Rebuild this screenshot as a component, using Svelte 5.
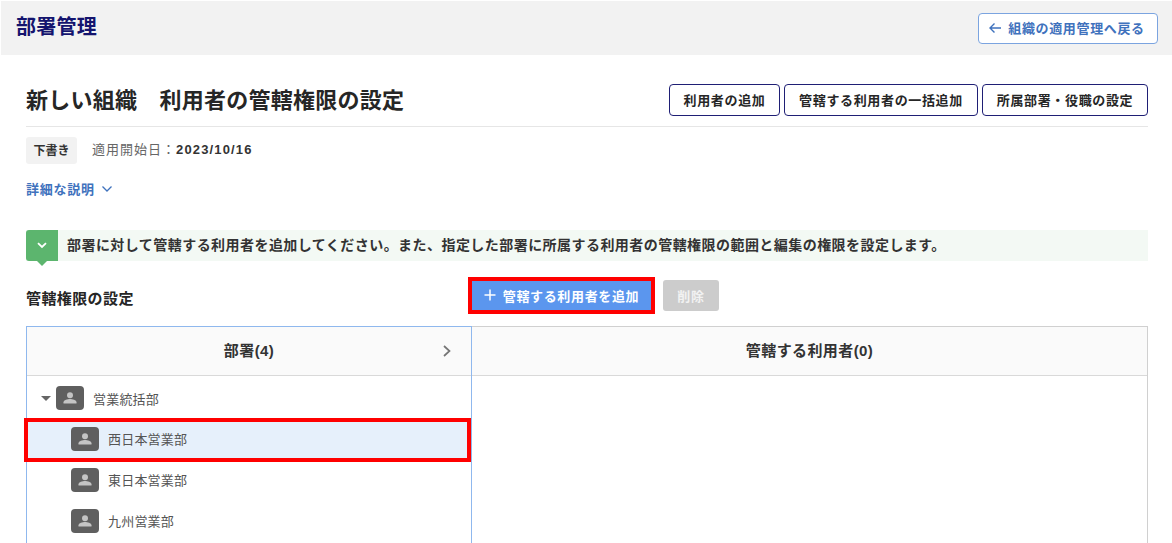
<script>
  const departments = [
    { name: '西日本営業部', selected: true },
    { name: '東日本営業部' },
    { name: '九州営業部' }
  ]
</script>

{#snippet orgIcon()}
  <span class="org-icon">
    <svg width="16" height="16" viewBox="0 0 16 16" aria-hidden="true">
      <circle cx="8" cy="5.2" r="3" fill="#c4c4c4" />
      <path d="M1.5 13.5v-1.3c0-2 4.2-3.2 6.5-3.2s6.5 1.2 6.5 3.2v1.3z" fill="#c4c4c4" />
    </svg>
  </span>
{/snippet}

<div class="page">
  <header class="top">
    <h1>部署管理</h1>
    <button class="back">
      <svg width="14" height="14" viewBox="0 0 14 14" aria-hidden="true">
        <path d="M13 7H2M6.5 2.5L2 7l4.5 4.5" fill="none" stroke="currentColor" stroke-width="1.4" />
      </svg>
      組織の適用管理へ戻る
    </button>
  </header>

  <main>
    <div class="title-row">
      <h2>新しい組織　利用者の管轄権限の設定</h2>
      <div class="actions">
        <button class="outline w1">利用者の追加</button>
        <button class="outline w2">管轄する利用者の一括追加</button>
        <button class="outline w3">所属部署・役職の設定</button>
      </div>
    </div>

    <div class="meta">
      <span class="badge">下書き</span>
      <span class="date">適用開始日：<b>2023/10/16</b></span>
    </div>

    <a class="detail" href="#top">
      詳細な説明
      <svg width="12" height="8" viewBox="0 0 12 8" aria-hidden="true">
        <path d="M1.5 1.5L6 6l4.5-4.5" fill="none" stroke="currentColor" stroke-width="1.3" />
      </svg>
    </a>

    <div class="notice">
      <span class="notice-icon">
        <svg width="10" height="7" viewBox="0 0 10 7" aria-hidden="true">
          <path d="M1 1.2L5 5l4-3.8" fill="none" stroke="#fff" stroke-width="1.8" />
        </svg>
      </span>
      <p>部署に対して管轄する利用者を追加してください。また、指定した部署に所属する利用者の管轄権限の範囲と編集の権限を設定します。</p>
    </div>

    <div class="section-row">
      <h3>管轄権限の設定</h3>
      <div class="section-actions">
        <button class="primary">
          <svg width="12" height="12" viewBox="0 0 12 12" aria-hidden="true">
            <path d="M6 .5v11M.5 6h11" stroke="#fff" stroke-width="1.5" />
          </svg>
          管轄する利用者を追加
        </button>
        <button class="disabled">削除</button>
      </div>
    </div>

    <div class="table">
      <section class="left">
        <div class="th">
          部署(4)
          <svg class="expand" width="10" height="14" viewBox="0 0 10 14" aria-hidden="true">
            <path d="M2 2l5.5 5L2 12" fill="none" stroke="#757575" stroke-width="1.7" />
          </svg>
        </div>
        <div class="row root">
          <span class="caret"></span>
          {@render orgIcon()}
          <span class="name">営業統括部</span>
        </div>
        {#each departments as d}
          <div class="row child" class:selected={d.selected}>
            {@render orgIcon()}
            <span class="name">{d.name}</span>
          </div>
        {/each}
      </section>
      <section class="right">
        <div class="th">管轄する利用者(0)</div>
      </section>
    </div>
  </main>
</div>

<style>
  :global(body) {
    margin: 0;
    background: #fff;
    overflow: hidden;
  }

  .page {
    height: 543px;
    overflow: hidden;
    font-family: 'Liberation Sans', 'Noto Sans CJK JP', sans-serif;
    color: #333;
  }

  button {
    font-family: inherit;
    cursor: pointer;
  }

  .top {
    height: 54px;
    margin: 1px 0 0 1px;
    padding: 0 14px 0 15px;
    background: #f2f2f2;
    display: flex;
    align-items: center;
    justify-content: space-between;
  }

  h1 {
    margin: 0 0 2px;
    font-size: 20px;
    line-height: 28px;
    letter-spacing: 0.25px;
    font-weight: 700;
    color: #14146e;
  }

  .back {
    width: 180px;
    height: 31px;
    padding: 0 3px 1px 0;
    display: flex;
    align-items: center;
    justify-content: center;
    gap: 6px;
    background: #fff;
    border: 1px solid #7ba4e0;
    border-radius: 4px;
    font-size: 13px;
    letter-spacing: 0.65px;
    font-weight: 700;
    color: #3f72bd;
  }

  main {
    padding: 0 24px 0 26px;
  }

  .title-row {
    height: 72px;
    padding-top: 29px;
    box-sizing: border-box;
    display: flex;
    justify-content: space-between;
    border-bottom: 1px solid #e6e6e6;
  }

  h2 {
    margin: 1px 0 0;
    font-size: 22px;
    line-height: 32px;
    letter-spacing: 0.25px;
    font-weight: 700;
    color: #262626;
    white-space: nowrap;
  }

  .actions {
    display: flex;
    gap: 4px;
  }

  .outline {
    height: 32px;
    padding: 0 0 2px;
    background: #fff;
    border: 1px solid #1f1f75;
    border-radius: 4px;
    font-size: 13px;
    letter-spacing: 0.65px;
    font-weight: 700;
    color: #262626;
  }

  .w1 { width: 111px; }
  .w2 { width: 194px; }
  .w3 { width: 166px; }

  .meta {
    margin-top: 10px;
    display: flex;
    align-items: center;
    gap: 15px;
  }

  .badge {
    width: 51px;
    height: 27px;
    padding-bottom: 2px;
    box-sizing: border-box;
    display: flex;
    align-items: center;
    justify-content: center;
    background: #f2f2f2;
    border-radius: 3px;
    font-size: 12px;
    font-weight: 700;
    color: #333;
  }

  .date {
    padding-bottom: 4px;
    font-size: 13px;
    letter-spacing: 1px;
    color: #666;
  }

  .date b {
    color: #333;
    letter-spacing: 1.15px;
    font-size: 13px;
  }

  .detail {
    margin-top: 15px;
    display: flex;
    align-items: center;
    gap: 6px;
    height: 19px;
    font-size: 13px;
    letter-spacing: 0.75px;
    font-weight: 700;
    color: #3f72bd;
    text-decoration: none;
  }

  .notice {
    margin-top: 32px;
    height: 31px;
    display: flex;
    align-items: center;
    gap: 9px;
    background: #f3f9f4;
  }

  .notice-icon {
    position: relative;
    width: 32px;
    height: 31px;
    display: flex;
    align-items: center;
    justify-content: center;
    background: #5cb56e;
    border-radius: 3px 0 0 3px;
  }

  .notice-icon::after {
    content: '';
    position: absolute;
    left: 11px;
    top: 31px;
    border: 5px solid transparent;
    border-top-color: #5cb56e;
    border-bottom: 0;
  }

  .notice p {
    margin: 0 0 4px;
    font-size: 14px;
    letter-spacing: 0.45px;
    font-weight: 700;
    color: #333;
    white-space: nowrap;
  }

  .section-row {
    height: 65px;
    display: flex;
    align-items: flex-start;
  }

  h3 {
    width: 446px;
    margin: 27px 0 0;
    font-size: 15px;
    line-height: 22px;
    letter-spacing: 0.4px;
    font-weight: 700;
    color: #262626;
  }

  .section-actions {
    margin-top: 16px;
    display: flex;
    gap: 12px;
  }

  .primary {
    width: 179px;
    height: 29px;
    margin-top: 4px;
    padding: 0 0 1px;
    display: flex;
    align-items: center;
    justify-content: center;
    gap: 7px;
    background: #5b96ee;
    border: 0;
    outline: 4px solid #f00;
    font-size: 13px;
    letter-spacing: 0.65px;
    font-weight: 700;
    color: #fff;
  }

  .disabled {
    width: 56px;
    height: 31px;
    margin-top: 3px;
    padding: 0 0 1px;
    background: #ccc;
    border: 0;
    border-radius: 3px;
    font-size: 13px;
    letter-spacing: 0.65px;
    font-weight: 700;
    color: #f2f2f2;
  }

  .table {
    display: flex;
    height: 300px;
    border-top: 1px solid #d0d0d0;
    border-right: 1px solid #d0d0d0;
  }

  .left {
    width: 446px;
    box-sizing: border-box;
    border-left: 1px solid #8fb8ee;
    border-right: 1px solid #8fb8ee;
    border-top: 1px solid #8fb8ee;
    margin-top: -1px;
  }

  .right {
    flex: 1;
  }

  .th {
    position: relative;
    height: 49px;
    padding-bottom: 3px;
    box-sizing: border-box;
    display: flex;
    align-items: center;
    justify-content: center;
    background: #fafafa;
    border-bottom: 1px solid #d9d9d9;
    font-size: 15px;
    letter-spacing: 0.4px;
    font-weight: 700;
    color: #333;
  }

  .expand {
    position: absolute;
    right: 19px;
    top: 17px;
  }

  .row {
    height: 41px;
    display: flex;
    align-items: center;
    font-size: 13px;
    letter-spacing: 0.2px;
    color: #555;
  }

  .root {
    height: 42px;
    box-sizing: border-box;
    padding: 2px 0 0 14px;
  }

  .child {
    padding-left: 44px;
  }

  .selected {
    position: relative;
    background: #e6f0fb;
  }

  .selected::after {
    content: '';
    position: absolute;
    left: -3px;
    right: 0;
    top: 0;
    bottom: -3px;
    border: 4px solid #f00;
  }

  .caret {
    width: 0;
    height: 0;
    margin-right: 5px;
    border: 5px solid transparent;
    border-top: 5px solid #666;
    border-bottom: 0;
  }

  .org-icon {
    width: 28px;
    height: 24px;
    margin-right: 9px;
    display: flex;
    align-items: center;
    justify-content: center;
    background: #5f5f5f;
    border-radius: 4px;
  }
</style>
